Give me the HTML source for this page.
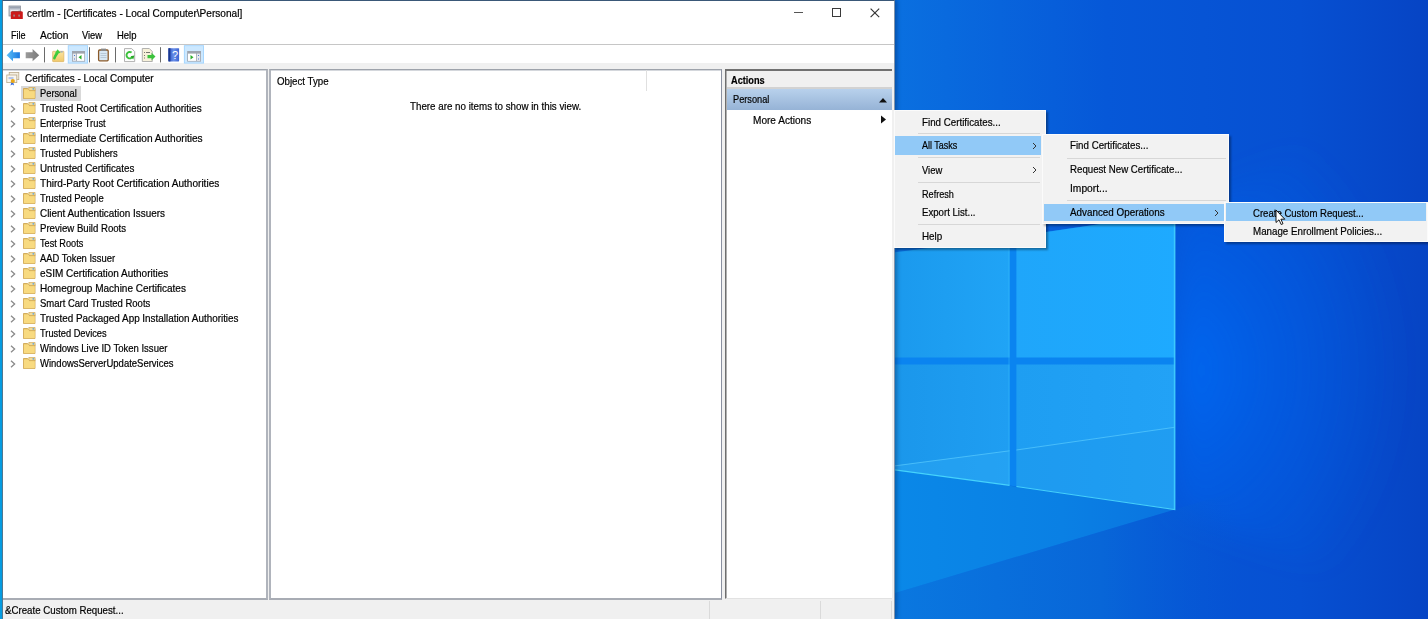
<!DOCTYPE html>
<html><head><meta charset="utf-8">
<style>
*{margin:0;padding:0;box-sizing:border-box}
html,body{width:1428px;height:619px;overflow:hidden;background:#0a5fd0}
body{position:relative;font-family:"Liberation Sans",sans-serif;font-size:9.8px;color:#161616}
.a{position:absolute;display:block}
.t{position:absolute;white-space:nowrap;line-height:1;transform-origin:0 0;color:#000;-webkit-text-stroke:0.2px #000}
.b{position:absolute}
</style></head><body>
<svg class="a" style="left:0;top:0" width="1428" height="619" viewBox="0 0 1428 619">
<defs>
<linearGradient id="bg" x1="893" y1="0" x2="1428" y2="0" gradientUnits="userSpaceOnUse">
<stop offset="0" stop-color="#0a70e0"/>
<stop offset="0.4" stop-color="#0658d8"/>
<stop offset="0.76" stop-color="#0650d2"/>
<stop offset="1" stop-color="#0644c4"/>
</linearGradient>
<linearGradient id="glow" x1="1175" y1="0" x2="1400" y2="0" gradientUnits="userSpaceOnUse">
<stop offset="0" stop-color="#0066f0" stop-opacity="1"/>
<stop offset="1" stop-color="#0066f0" stop-opacity="0"/>
</linearGradient>
<radialGradient id="glow2" cx="1175" cy="370" r="230" gradientUnits="userSpaceOnUse" gradientTransform="translate(1175 370) scale(1 1.2) translate(-1175 -370)">
<stop offset="0" stop-color="#0068f2" stop-opacity="0.95"/>
<stop offset="0.5" stop-color="#0062ec" stop-opacity="0.45"/>
<stop offset="1" stop-color="#0060e8" stop-opacity="0"/>
</radialGradient>
<filter id="gb" x="-50%" y="-50%" width="200%" height="200%"><feGaussianBlur stdDeviation="14"/></filter>
<linearGradient id="below" x1="893" y1="0" x2="1240" y2="0" gradientUnits="userSpaceOnUse">
<stop offset="0" stop-color="#0a78e0"/>
<stop offset="0.6" stop-color="#0866d8"/>
<stop offset="1" stop-color="#0658d4" stop-opacity="0"/>
</linearGradient>
<linearGradient id="floor" x1="893" y1="0" x2="1175" y2="0" gradientUnits="userSpaceOnUse">
<stop offset="0" stop-color="#0a88e8"/>
<stop offset="0.6" stop-color="#0a80e4"/>
<stop offset="1" stop-color="#0a74e0"/>
</linearGradient>
<linearGradient id="pul" x1="880" y1="0" x2="1010" y2="0" gradientUnits="userSpaceOnUse">
<stop offset="0" stop-color="#1a98ec"/><stop offset="1" stop-color="#20a4f6"/>
</linearGradient>
<linearGradient id="pur" x1="1017" y1="0" x2="1175" y2="0" gradientUnits="userSpaceOnUse">
<stop offset="0" stop-color="#1fa6fa"/><stop offset="1" stop-color="#1eaaff"/>
</linearGradient>
<linearGradient id="pll" x1="880" y1="0" x2="1010" y2="0" gradientUnits="userSpaceOnUse">
<stop offset="0" stop-color="#1a96ea"/><stop offset="1" stop-color="#1f9ef2"/>
</linearGradient>
<linearGradient id="plr" x1="1017" y1="0" x2="1175" y2="0" gradientUnits="userSpaceOnUse">
<stop offset="0" stop-color="#1e9ef2"/><stop offset="1" stop-color="#22a2f6"/>
</linearGradient>
</defs>
<rect width="1428" height="619" fill="url(#bg)"/>
<rect x="0" y="0" width="4" height="619" fill="#06a0e6"/>
<polygon points="1175,213 1300,150 1428,140 1428,600 1300,560 1175,509" fill="url(#glow2)" filter="url(#gb)"/>
<polygon points="880,597.5 1175,509.5 1428,434 1428,619 880,619" fill="url(#below)"/>
<polygon points="880,467 1175,509.5 880,597.5" fill="url(#floor)"/>
<polygon points="880,256 1175,213 1175,509 880,467" fill="#0a84f0"/>
<polygon points="880,254.3 1009.6,237.5 1009.6,357.6 880,357.6" fill="url(#pul)"/>
<polygon points="1016.4,236.5 1174.5,213 1174.5,357.6 1016.4,357.6" fill="url(#pur)"/>
<polygon points="880,364.5 1009.6,364.5 1009.6,485 880,467.5" fill="url(#pll)"/>
<polygon points="1016.4,364.5 1174.5,364.5 1174.5,509 1016.4,486" fill="url(#plr)"/>
<polygon points="880,467.5 1009.6,450.8 1009.6,485" fill="#2aa6f4" opacity="0.5"/>
<polygon points="1016.4,450 1174.5,427.3 1174.5,509 1016.4,486" fill="#1c94ec" opacity="0.35"/>
<path d="M880,467.8 L1009.6,450.8 M1016.4,450 L1174.5,427.3" stroke="#60d0ff" stroke-width="0.9" opacity="0.7"/>
<path d="M1174.8,213 V509.5 L1016.4,486.5 M1009.6,485.3 L880,467.8" stroke="#50e0ff" stroke-width="1.2" fill="none" opacity="0.85"/>
<path d="M1009,238 V485 M1174,214 V509" stroke="#40c8ff" stroke-width="0.8" opacity="0.5"/>
</svg>
<div class="b" style="left:2px;top:0;width:893px;height:619px;background:#fff;border:1px solid #3a5878;border-right-color:rgba(30,60,100,0.55);border-left-color:#4f7890;border-bottom:none;box-shadow:2px 0 4px rgba(0,20,60,0.35)"></div>
<div class="b" style="left:3px;top:44px;width:891px;height:1px;background:#c6c6c6"></div>
<div class="b" style="left:3px;top:63px;width:891px;height:556px;background:#f0f0f0"></div>
<div class="b" style="left:3px;top:69px;width:265px;height:531px;background:#fff;border-top:1px solid #9ea3ab;border-right:2px solid #b0b4bc;border-bottom:2px solid #a8acb4;box-shadow:inset 0 1px 0 #d4d7dc"></div>
<div class="b" style="left:269px;top:69px;width:453px;height:531px;background:#fff;border-top:1px solid #9ea3ab;border-left:2px solid #b0b4bc;border-right:1px solid #8a90a0;border-bottom:2px solid #a8acb4;box-shadow:inset 0 1px 0 #d4d7dc"></div>
<div class="b" style="left:725px;top:69px;width:167px;height:530px;background:#fff;border-left:1px solid #6e6e6e;border-top:2px solid #707070;border-bottom:1px solid #e2e2e2;box-shadow:inset 1px 0 0 #b0b0b0"></div>
<div class="b" style="left:727px;top:71px;width:165px;height:18px;background:#f0f0f0;border-bottom:2px solid #d2d2d2"></div>
<div class="b" style="left:727px;top:89px;width:165px;height:20.6px;background:linear-gradient(#b8d1ec,#96b3d6)"></div>
<div class="b" style="left:646px;top:70px;width:1px;height:21px;background:#e0e0e0"></div>
<div class="b" style="left:709px;top:601px;width:1px;height:18px;background:#dadada"></div>
<div class="b" style="left:820px;top:601px;width:1px;height:18px;background:#dadada"></div>
<div class="b" style="left:891px;top:601px;width:1px;height:18px;background:#dadada"></div>
<div class="b" style="left:21px;top:86px;width:60px;height:15px;background:#d9d9d9"></div>
<svg class="a" style="left:8px;top:5px" width="16" height="15" viewBox="0 0 16 15"><rect x="1" y="1" width="11.5" height="10" fill="#c8cdd6" stroke="#8a909a" stroke-width="0.8"/><rect x="1.5" y="1.5" width="10.5" height="2" fill="#9aa2b0"/><rect x="2.5" y="5" width="8" height="4" fill="#eef0f4"/><path d="M2.8 7.6 q0-1.4 1.4-1.4 h8.8 q1.8 0 1.8 1.4 v6.5 h-12z" fill="#cc1a1a"/><path d="M4.2 6.4 h8.8" stroke="#7a3030" stroke-width="0.6"/><rect x="5.4" y="9.6" width="1.4" height="2" fill="#9a9a9a"/><rect x="10.4" y="9.6" width="1.4" height="2" fill="#9a9a9a"/></svg>
<div class="b" style="left:794px;top:12px;width:9px;height:1px;background:#555"></div>
<div class="b" style="left:832px;top:8px;width:8.6px;height:8.6px;border:1px solid #3a3a3a"></div>
<svg class="a" style="left:870px;top:8px" width="10" height="10" viewBox="0 0 10 10"><path d="M0.6 0.6 L9.2 9.2 M9.2 0.6 L0.6 9.2" stroke="#333" stroke-width="1.15"/></svg>
<svg class="a" style="left:6px;top:72px" width="14" height="14" viewBox="0 0 14 14"><rect x="3.2" y="0.4" width="9.6" height="7.2" fill="#f4efe2" stroke="#b9a98a" stroke-width="0.8"/><rect x="0.8" y="3" width="10" height="7.6" fill="#faf7ee" stroke="#b9a98a" stroke-width="0.8"/><rect x="2.5" y="5" width="5" height="2.2" fill="#b8c6e8"/><path d="M5.3 10.5 l-0.8 3 l1.8-1 l1.8 1 l-0.8-3z" fill="#3b6fe0"/><circle cx="6.8" cy="9" r="2.1" fill="#e8a81a"/></svg>
<svg class="a" style="left:23px;top:87.0px" width="13" height="12" viewBox="0 0 13 12"><path d="M0.5 1.5 h4 l1 1 h6.5 v9 h-11.5z" fill="#e8c46a" stroke="#caa04a" stroke-width="0.8"/><path d="M5.8 0.5 h6.3 v3 h-6.3z" fill="#f2dc9a" stroke="#caa04a" stroke-width="0.6"/><circle cx="10.3" cy="1.8" r="0.9" fill="#6aa6d8"/><path d="M0.9 2.6 h4.6 l0.8 1.6 h5.5 v7 h-10.9z" fill="#f8da80"/></svg>
<svg class="a" style="left:23px;top:102.0px" width="13" height="12" viewBox="0 0 13 12"><path d="M0.5 1.5 h4 l1 1 h6.5 v9 h-11.5z" fill="#e8c46a" stroke="#caa04a" stroke-width="0.8"/><path d="M5.8 0.5 h6.3 v3 h-6.3z" fill="#f2dc9a" stroke="#caa04a" stroke-width="0.6"/><circle cx="10.3" cy="1.8" r="0.9" fill="#6aa6d8"/><path d="M0.9 2.6 h4.6 l0.8 1.6 h5.5 v7 h-10.9z" fill="#f8da80"/></svg>
<svg class="a" style="left:9.6px;top:105.1px" width="6" height="8" viewBox="0 0 6 8"><path d="M1 0.8 L4.6 4 L1 7.2" fill="none" stroke="#8a8a8a" stroke-width="1.3"/></svg>
<svg class="a" style="left:23px;top:117.0px" width="13" height="12" viewBox="0 0 13 12"><path d="M0.5 1.5 h4 l1 1 h6.5 v9 h-11.5z" fill="#e8c46a" stroke="#caa04a" stroke-width="0.8"/><path d="M5.8 0.5 h6.3 v3 h-6.3z" fill="#f2dc9a" stroke="#caa04a" stroke-width="0.6"/><circle cx="10.3" cy="1.8" r="0.9" fill="#6aa6d8"/><path d="M0.9 2.6 h4.6 l0.8 1.6 h5.5 v7 h-10.9z" fill="#f8da80"/></svg>
<svg class="a" style="left:9.6px;top:120.1px" width="6" height="8" viewBox="0 0 6 8"><path d="M1 0.8 L4.6 4 L1 7.2" fill="none" stroke="#8a8a8a" stroke-width="1.3"/></svg>
<svg class="a" style="left:23px;top:132.0px" width="13" height="12" viewBox="0 0 13 12"><path d="M0.5 1.5 h4 l1 1 h6.5 v9 h-11.5z" fill="#e8c46a" stroke="#caa04a" stroke-width="0.8"/><path d="M5.8 0.5 h6.3 v3 h-6.3z" fill="#f2dc9a" stroke="#caa04a" stroke-width="0.6"/><circle cx="10.3" cy="1.8" r="0.9" fill="#6aa6d8"/><path d="M0.9 2.6 h4.6 l0.8 1.6 h5.5 v7 h-10.9z" fill="#f8da80"/></svg>
<svg class="a" style="left:9.6px;top:135.1px" width="6" height="8" viewBox="0 0 6 8"><path d="M1 0.8 L4.6 4 L1 7.2" fill="none" stroke="#8a8a8a" stroke-width="1.3"/></svg>
<svg class="a" style="left:23px;top:147.0px" width="13" height="12" viewBox="0 0 13 12"><path d="M0.5 1.5 h4 l1 1 h6.5 v9 h-11.5z" fill="#e8c46a" stroke="#caa04a" stroke-width="0.8"/><path d="M5.8 0.5 h6.3 v3 h-6.3z" fill="#f2dc9a" stroke="#caa04a" stroke-width="0.6"/><circle cx="10.3" cy="1.8" r="0.9" fill="#6aa6d8"/><path d="M0.9 2.6 h4.6 l0.8 1.6 h5.5 v7 h-10.9z" fill="#f8da80"/></svg>
<svg class="a" style="left:9.6px;top:150.1px" width="6" height="8" viewBox="0 0 6 8"><path d="M1 0.8 L4.6 4 L1 7.2" fill="none" stroke="#8a8a8a" stroke-width="1.3"/></svg>
<svg class="a" style="left:23px;top:162.0px" width="13" height="12" viewBox="0 0 13 12"><path d="M0.5 1.5 h4 l1 1 h6.5 v9 h-11.5z" fill="#e8c46a" stroke="#caa04a" stroke-width="0.8"/><path d="M5.8 0.5 h6.3 v3 h-6.3z" fill="#f2dc9a" stroke="#caa04a" stroke-width="0.6"/><circle cx="10.3" cy="1.8" r="0.9" fill="#6aa6d8"/><path d="M0.9 2.6 h4.6 l0.8 1.6 h5.5 v7 h-10.9z" fill="#f8da80"/></svg>
<svg class="a" style="left:9.6px;top:165.1px" width="6" height="8" viewBox="0 0 6 8"><path d="M1 0.8 L4.6 4 L1 7.2" fill="none" stroke="#8a8a8a" stroke-width="1.3"/></svg>
<svg class="a" style="left:23px;top:177.0px" width="13" height="12" viewBox="0 0 13 12"><path d="M0.5 1.5 h4 l1 1 h6.5 v9 h-11.5z" fill="#e8c46a" stroke="#caa04a" stroke-width="0.8"/><path d="M5.8 0.5 h6.3 v3 h-6.3z" fill="#f2dc9a" stroke="#caa04a" stroke-width="0.6"/><circle cx="10.3" cy="1.8" r="0.9" fill="#6aa6d8"/><path d="M0.9 2.6 h4.6 l0.8 1.6 h5.5 v7 h-10.9z" fill="#f8da80"/></svg>
<svg class="a" style="left:9.6px;top:180.1px" width="6" height="8" viewBox="0 0 6 8"><path d="M1 0.8 L4.6 4 L1 7.2" fill="none" stroke="#8a8a8a" stroke-width="1.3"/></svg>
<svg class="a" style="left:23px;top:192.0px" width="13" height="12" viewBox="0 0 13 12"><path d="M0.5 1.5 h4 l1 1 h6.5 v9 h-11.5z" fill="#e8c46a" stroke="#caa04a" stroke-width="0.8"/><path d="M5.8 0.5 h6.3 v3 h-6.3z" fill="#f2dc9a" stroke="#caa04a" stroke-width="0.6"/><circle cx="10.3" cy="1.8" r="0.9" fill="#6aa6d8"/><path d="M0.9 2.6 h4.6 l0.8 1.6 h5.5 v7 h-10.9z" fill="#f8da80"/></svg>
<svg class="a" style="left:9.6px;top:195.1px" width="6" height="8" viewBox="0 0 6 8"><path d="M1 0.8 L4.6 4 L1 7.2" fill="none" stroke="#8a8a8a" stroke-width="1.3"/></svg>
<svg class="a" style="left:23px;top:207.0px" width="13" height="12" viewBox="0 0 13 12"><path d="M0.5 1.5 h4 l1 1 h6.5 v9 h-11.5z" fill="#e8c46a" stroke="#caa04a" stroke-width="0.8"/><path d="M5.8 0.5 h6.3 v3 h-6.3z" fill="#f2dc9a" stroke="#caa04a" stroke-width="0.6"/><circle cx="10.3" cy="1.8" r="0.9" fill="#6aa6d8"/><path d="M0.9 2.6 h4.6 l0.8 1.6 h5.5 v7 h-10.9z" fill="#f8da80"/></svg>
<svg class="a" style="left:9.6px;top:210.1px" width="6" height="8" viewBox="0 0 6 8"><path d="M1 0.8 L4.6 4 L1 7.2" fill="none" stroke="#8a8a8a" stroke-width="1.3"/></svg>
<svg class="a" style="left:23px;top:222.0px" width="13" height="12" viewBox="0 0 13 12"><path d="M0.5 1.5 h4 l1 1 h6.5 v9 h-11.5z" fill="#e8c46a" stroke="#caa04a" stroke-width="0.8"/><path d="M5.8 0.5 h6.3 v3 h-6.3z" fill="#f2dc9a" stroke="#caa04a" stroke-width="0.6"/><circle cx="10.3" cy="1.8" r="0.9" fill="#6aa6d8"/><path d="M0.9 2.6 h4.6 l0.8 1.6 h5.5 v7 h-10.9z" fill="#f8da80"/></svg>
<svg class="a" style="left:9.6px;top:225.1px" width="6" height="8" viewBox="0 0 6 8"><path d="M1 0.8 L4.6 4 L1 7.2" fill="none" stroke="#8a8a8a" stroke-width="1.3"/></svg>
<svg class="a" style="left:23px;top:237.0px" width="13" height="12" viewBox="0 0 13 12"><path d="M0.5 1.5 h4 l1 1 h6.5 v9 h-11.5z" fill="#e8c46a" stroke="#caa04a" stroke-width="0.8"/><path d="M5.8 0.5 h6.3 v3 h-6.3z" fill="#f2dc9a" stroke="#caa04a" stroke-width="0.6"/><circle cx="10.3" cy="1.8" r="0.9" fill="#6aa6d8"/><path d="M0.9 2.6 h4.6 l0.8 1.6 h5.5 v7 h-10.9z" fill="#f8da80"/></svg>
<svg class="a" style="left:9.6px;top:240.1px" width="6" height="8" viewBox="0 0 6 8"><path d="M1 0.8 L4.6 4 L1 7.2" fill="none" stroke="#8a8a8a" stroke-width="1.3"/></svg>
<svg class="a" style="left:23px;top:252.0px" width="13" height="12" viewBox="0 0 13 12"><path d="M0.5 1.5 h4 l1 1 h6.5 v9 h-11.5z" fill="#e8c46a" stroke="#caa04a" stroke-width="0.8"/><path d="M5.8 0.5 h6.3 v3 h-6.3z" fill="#f2dc9a" stroke="#caa04a" stroke-width="0.6"/><circle cx="10.3" cy="1.8" r="0.9" fill="#6aa6d8"/><path d="M0.9 2.6 h4.6 l0.8 1.6 h5.5 v7 h-10.9z" fill="#f8da80"/></svg>
<svg class="a" style="left:9.6px;top:255.1px" width="6" height="8" viewBox="0 0 6 8"><path d="M1 0.8 L4.6 4 L1 7.2" fill="none" stroke="#8a8a8a" stroke-width="1.3"/></svg>
<svg class="a" style="left:23px;top:267.0px" width="13" height="12" viewBox="0 0 13 12"><path d="M0.5 1.5 h4 l1 1 h6.5 v9 h-11.5z" fill="#e8c46a" stroke="#caa04a" stroke-width="0.8"/><path d="M5.8 0.5 h6.3 v3 h-6.3z" fill="#f2dc9a" stroke="#caa04a" stroke-width="0.6"/><circle cx="10.3" cy="1.8" r="0.9" fill="#6aa6d8"/><path d="M0.9 2.6 h4.6 l0.8 1.6 h5.5 v7 h-10.9z" fill="#f8da80"/></svg>
<svg class="a" style="left:9.6px;top:270.1px" width="6" height="8" viewBox="0 0 6 8"><path d="M1 0.8 L4.6 4 L1 7.2" fill="none" stroke="#8a8a8a" stroke-width="1.3"/></svg>
<svg class="a" style="left:23px;top:282.0px" width="13" height="12" viewBox="0 0 13 12"><path d="M0.5 1.5 h4 l1 1 h6.5 v9 h-11.5z" fill="#e8c46a" stroke="#caa04a" stroke-width="0.8"/><path d="M5.8 0.5 h6.3 v3 h-6.3z" fill="#f2dc9a" stroke="#caa04a" stroke-width="0.6"/><circle cx="10.3" cy="1.8" r="0.9" fill="#6aa6d8"/><path d="M0.9 2.6 h4.6 l0.8 1.6 h5.5 v7 h-10.9z" fill="#f8da80"/></svg>
<svg class="a" style="left:9.6px;top:285.1px" width="6" height="8" viewBox="0 0 6 8"><path d="M1 0.8 L4.6 4 L1 7.2" fill="none" stroke="#8a8a8a" stroke-width="1.3"/></svg>
<svg class="a" style="left:23px;top:297.0px" width="13" height="12" viewBox="0 0 13 12"><path d="M0.5 1.5 h4 l1 1 h6.5 v9 h-11.5z" fill="#e8c46a" stroke="#caa04a" stroke-width="0.8"/><path d="M5.8 0.5 h6.3 v3 h-6.3z" fill="#f2dc9a" stroke="#caa04a" stroke-width="0.6"/><circle cx="10.3" cy="1.8" r="0.9" fill="#6aa6d8"/><path d="M0.9 2.6 h4.6 l0.8 1.6 h5.5 v7 h-10.9z" fill="#f8da80"/></svg>
<svg class="a" style="left:9.6px;top:300.1px" width="6" height="8" viewBox="0 0 6 8"><path d="M1 0.8 L4.6 4 L1 7.2" fill="none" stroke="#8a8a8a" stroke-width="1.3"/></svg>
<svg class="a" style="left:23px;top:312.0px" width="13" height="12" viewBox="0 0 13 12"><path d="M0.5 1.5 h4 l1 1 h6.5 v9 h-11.5z" fill="#e8c46a" stroke="#caa04a" stroke-width="0.8"/><path d="M5.8 0.5 h6.3 v3 h-6.3z" fill="#f2dc9a" stroke="#caa04a" stroke-width="0.6"/><circle cx="10.3" cy="1.8" r="0.9" fill="#6aa6d8"/><path d="M0.9 2.6 h4.6 l0.8 1.6 h5.5 v7 h-10.9z" fill="#f8da80"/></svg>
<svg class="a" style="left:9.6px;top:315.1px" width="6" height="8" viewBox="0 0 6 8"><path d="M1 0.8 L4.6 4 L1 7.2" fill="none" stroke="#8a8a8a" stroke-width="1.3"/></svg>
<svg class="a" style="left:23px;top:327.0px" width="13" height="12" viewBox="0 0 13 12"><path d="M0.5 1.5 h4 l1 1 h6.5 v9 h-11.5z" fill="#e8c46a" stroke="#caa04a" stroke-width="0.8"/><path d="M5.8 0.5 h6.3 v3 h-6.3z" fill="#f2dc9a" stroke="#caa04a" stroke-width="0.6"/><circle cx="10.3" cy="1.8" r="0.9" fill="#6aa6d8"/><path d="M0.9 2.6 h4.6 l0.8 1.6 h5.5 v7 h-10.9z" fill="#f8da80"/></svg>
<svg class="a" style="left:9.6px;top:330.1px" width="6" height="8" viewBox="0 0 6 8"><path d="M1 0.8 L4.6 4 L1 7.2" fill="none" stroke="#8a8a8a" stroke-width="1.3"/></svg>
<svg class="a" style="left:23px;top:342.0px" width="13" height="12" viewBox="0 0 13 12"><path d="M0.5 1.5 h4 l1 1 h6.5 v9 h-11.5z" fill="#e8c46a" stroke="#caa04a" stroke-width="0.8"/><path d="M5.8 0.5 h6.3 v3 h-6.3z" fill="#f2dc9a" stroke="#caa04a" stroke-width="0.6"/><circle cx="10.3" cy="1.8" r="0.9" fill="#6aa6d8"/><path d="M0.9 2.6 h4.6 l0.8 1.6 h5.5 v7 h-10.9z" fill="#f8da80"/></svg>
<svg class="a" style="left:9.6px;top:345.1px" width="6" height="8" viewBox="0 0 6 8"><path d="M1 0.8 L4.6 4 L1 7.2" fill="none" stroke="#8a8a8a" stroke-width="1.3"/></svg>
<svg class="a" style="left:23px;top:357.0px" width="13" height="12" viewBox="0 0 13 12"><path d="M0.5 1.5 h4 l1 1 h6.5 v9 h-11.5z" fill="#e8c46a" stroke="#caa04a" stroke-width="0.8"/><path d="M5.8 0.5 h6.3 v3 h-6.3z" fill="#f2dc9a" stroke="#caa04a" stroke-width="0.6"/><circle cx="10.3" cy="1.8" r="0.9" fill="#6aa6d8"/><path d="M0.9 2.6 h4.6 l0.8 1.6 h5.5 v7 h-10.9z" fill="#f8da80"/></svg>
<svg class="a" style="left:9.6px;top:360.1px" width="6" height="8" viewBox="0 0 6 8"><path d="M1 0.8 L4.6 4 L1 7.2" fill="none" stroke="#8a8a8a" stroke-width="1.3"/></svg>
<svg class="a" style="left:878px;top:97px" width="10" height="6" viewBox="0 0 10 6"><path d="M1 5.5 L5 1 L9 5.5z" fill="#111"/></svg>
<svg class="a" style="left:880px;top:115px" width="7" height="9" viewBox="0 0 7 9"><path d="M1 0.5 L6 4.5 L1 8.5z" fill="#111"/></svg>
<svg class="a" style="left:0;top:44px" width="210" height="22" viewBox="0 44 210 22">
<defs>
<linearGradient id="ab" x1="0" x2="1"><stop offset="0" stop-color="#5cc0f8"/><stop offset="1" stop-color="#1a78e0"/></linearGradient>
<linearGradient id="ag" x1="0" x2="1"><stop offset="0" stop-color="#9a9a9a"/><stop offset="1" stop-color="#7a7a7a"/></linearGradient>
</defs>
<path d="M6.6 55.2 L13 49.1 V52.2 H19.9 V58.2 H13 V61.2z" fill="url(#ab)"/>
<path d="M39.2 55.2 L32.6 49.1 V52.2 H25.7 V58.2 H32.6 V61.2z" fill="url(#ag)"/>
<rect x="44" y="47.2" width="1" height="15.2" fill="#6a6a6a"/>
<defs><linearGradient id="fy" x1="0" y1="0" x2="0" y2="1"><stop offset="0" stop-color="#fbe3a0"/><stop offset="1" stop-color="#f0c96a"/></linearGradient></defs>
<rect x="52.6" y="51.3" width="11.3" height="10.4" rx="0.6" fill="url(#fy)" stroke="#d5ad5a" stroke-width="0.6"/>
<rect x="60.5" y="51" width="2.2" height="1.6" fill="#a8b0b8"/>
<path d="M54.4 58.2 C55.2 55.5 56.6 54.2 57.6 52.6" fill="none" stroke="#3cc83c" stroke-width="2.6" stroke-linecap="round"/>
<path d="M54.8 53.4 L57.6 49.2 L60.6 52.9z" fill="#40d040"/>
<rect x="68.2" y="45.7" width="19.4" height="17.4" fill="#cce8ff" stroke="#99d1ff" stroke-width="0.8"/>
<rect x="72" y="51" width="13" height="10.6" fill="#9ea4ae"/>
<rect x="72.8" y="53.6" width="3.4" height="7.3" fill="#e6e8ee"/>
<rect x="77" y="53.6" width="7.3" height="7.3" fill="#fff"/>
<path d="M78.5 57.2 L81.5 55 V59.4z" fill="#2cae2c"/>
<rect x="74" y="55" width="1" height="1" fill="#4a7ad0"/><rect x="74" y="58.5" width="1" height="1" fill="#4a7ad0"/>
<rect x="89" y="47.2" width="1" height="15.2" fill="#6a6a6a"/>
<rect x="98.6" y="50" width="9.6" height="10.8" rx="1" fill="#d8e8f4" stroke="#8a5a2a" stroke-width="1.3"/>
<rect x="101" y="48.6" width="5" height="2.4" fill="#8a8a8a"/>
<path d="M100.5 53.5 h6 M100.5 55.5 h6 M100.5 57.5 h6" stroke="#9ab" stroke-width="0.5"/>
<rect x="115" y="47.2" width="1" height="15.2" fill="#6a6a6a"/>
<path d="M124.5 48.6 h7.2 l3 3 v10 h-10.2z" fill="#fdfdfd" stroke="#a8a8a8" stroke-width="0.9"/>
<path d="M132.6 56.6 A3.2 3.2 0 1 1 131.6 52.6" fill="none" stroke="#3cc23c" stroke-width="1.9"/>
<path d="M130.6 56.2 L134.4 55.6 L133.2 59.4z" fill="#28a828"/>
<path d="M142.3 48.5 h7 l3 3 v10 h-10z" fill="#f7f1da" stroke="#a0a0a0" stroke-width="0.8"/>
<path d="M144 52.5 h1 M146 52.5 h4 M144 55.5 h1 M144 58 h1" stroke="#555" stroke-width="0.8"/>
<path d="M147.5 55 h4 v-2.2 l4 3.8 l-4 3.8 v-2.2 h-4z" fill="#3cc23c"/>
<rect x="160" y="47.2" width="1" height="15.2" fill="#6a6a6a"/>
<defs><linearGradient id="hb" x1="0" y1="0" x2="1" y2="0"><stop offset="0" stop-color="#2a50c0"/><stop offset="0.5" stop-color="#6a90ea"/><stop offset="1" stop-color="#3a62d0"/></linearGradient></defs>
<rect x="168.4" y="48.2" width="10.7" height="13.2" rx="0.6" fill="url(#hb)"/>
<rect x="168.4" y="48.2" width="2" height="13.2" fill="#1a3890"/>
<text x="175" y="59.4" font-family="Liberation Sans" font-size="11" fill="#fff" text-anchor="middle">?</text>
<rect x="184.3" y="45.7" width="19.3" height="17.4" fill="#cce8ff" stroke="#99d1ff" stroke-width="0.8"/>
<rect x="187.2" y="51" width="13.8" height="10.6" fill="#9ea4ae"/>
<rect x="188" y="53.6" width="8.2" height="7.3" fill="#fff"/>
<rect x="197" y="53.6" width="3.2" height="7.3" fill="#e6e8ee"/>
<path d="M190.5 55 L193.5 57.2 L190.5 59.4z" fill="#2cae2c"/>
<rect x="198" y="55" width="1" height="1" fill="#4a7ad0"/><rect x="198" y="58.5" width="1" height="1" fill="#4a7ad0"/>
</svg>
<div class="b" style="left:893.5px;top:109.7px;width:152px;height:138px;background:#f2f2f2;border:1px solid #fbfbfb;box-shadow:2px 2px 2px rgba(0,0,0,0.35)"></div>
<div class="b" style="left:894.5px;top:136.4px;width:146.5px;height:18.4px;background:#91c9f7"></div>
<div class="b" style="left:918px;top:133px;width:122px;height:1px;background:#d7d7d7"></div>
<div class="b" style="left:918px;top:157px;width:122px;height:1px;background:#d7d7d7"></div>
<div class="b" style="left:918px;top:181.5px;width:122px;height:1px;background:#d7d7d7"></div>
<div class="b" style="left:918px;top:224px;width:122px;height:1px;background:#d7d7d7"></div>
<svg class="a" style="left:1032px;top:141.5px" width="5" height="8" viewBox="0 0 5 8"><path d="M1 1 L4 4 L1 7" fill="none" stroke="#333" stroke-width="1"/></svg>
<svg class="a" style="left:1032px;top:165.5px" width="5" height="8" viewBox="0 0 5 8"><path d="M1 1 L4 4 L1 7" fill="none" stroke="#333" stroke-width="1"/></svg>
<div class="b" style="left:1041.5px;top:134px;width:187px;height:90px;background:#f2f2f2;border:1px solid #fbfbfb;box-shadow:2px 2px 2px rgba(0,0,0,0.35)"></div>
<div class="b" style="left:1043.6px;top:203.5px;width:180.2px;height:17.8px;background:#91c9f7"></div>
<div class="b" style="left:1066.7px;top:157.5px;width:159px;height:1px;background:#d7d7d7"></div>
<div class="b" style="left:1066.7px;top:200.3px;width:159px;height:1px;background:#d7d7d7"></div>
<svg class="a" style="left:1214px;top:208.5px" width="5" height="8" viewBox="0 0 5 8"><path d="M1 1 L4 4 L1 7" fill="none" stroke="#333" stroke-width="1"/></svg>
<div class="b" style="left:1224.4px;top:201.6px;width:203.6px;height:40.5px;background:#f2f2f2;border:1px solid #fbfbfb;box-shadow:2px 2px 2px rgba(0,0,0,0.35)"></div>
<div class="b" style="left:1226.1px;top:203.4px;width:200px;height:18.1px;background:#91c9f7"></div>
<div class="t" style="left:26.80px;top:8.01px;font-size:10.5px;transform:scaleX(0.9603);">certlm - [Certificates - Local Computer\Personal]</div>
<div class="t" style="left:11.30px;top:29.61px;font-size:10.5px;transform:scaleX(0.8647);">File</div>
<div class="t" style="left:39.60px;top:29.61px;font-size:10.5px;transform:scaleX(0.9759);">Action</div>
<div class="t" style="left:82.00px;top:29.61px;font-size:10.5px;transform:scaleX(0.8826);">View</div>
<div class="t" style="left:116.50px;top:29.61px;font-size:10.5px;transform:scaleX(0.9);">Help</div>
<div class="t" style="left:24.60px;top:73.41px;font-size:10.5px;transform:scaleX(0.9456);">Certificates - Local Computer</div>
<div class="t" style="left:40.40px;top:88.21px;font-size:10.5px;transform:scaleX(0.8857);">Personal</div>
<div class="t" style="left:40.40px;top:103.21px;font-size:10.5px;transform:scaleX(0.9485);">Trusted Root Certification Authorities</div>
<div class="t" style="left:40.40px;top:118.21px;font-size:10.5px;transform:scaleX(0.8853);">Enterprise Trust</div>
<div class="t" style="left:40.40px;top:133.21px;font-size:10.5px;transform:scaleX(0.9645);">Intermediate Certification Authorities</div>
<div class="t" style="left:40.40px;top:148.21px;font-size:10.5px;transform:scaleX(0.8909);">Trusted Publishers</div>
<div class="t" style="left:40.40px;top:163.21px;font-size:10.5px;transform:scaleX(0.9347);">Untrusted Certificates</div>
<div class="t" style="left:40.40px;top:178.21px;font-size:10.5px;transform:scaleX(0.9569);">Third-Party Root Certification Authorities</div>
<div class="t" style="left:40.40px;top:193.21px;font-size:10.5px;transform:scaleX(0.8986);">Trusted People</div>
<div class="t" style="left:40.40px;top:208.21px;font-size:10.5px;transform:scaleX(0.9429);">Client Authentication Issuers</div>
<div class="t" style="left:40.40px;top:223.21px;font-size:10.5px;transform:scaleX(0.916);">Preview Build Roots</div>
<div class="t" style="left:40.40px;top:238.21px;font-size:10.5px;transform:scaleX(0.872);">Test Roots</div>
<div class="t" style="left:40.40px;top:253.21px;font-size:10.5px;transform:scaleX(0.8952);">AAD Token Issuer</div>
<div class="t" style="left:40.40px;top:268.21px;font-size:10.5px;transform:scaleX(0.9511);">eSIM Certification Authorities</div>
<div class="t" style="left:40.40px;top:283.21px;font-size:10.5px;transform:scaleX(0.9542);">Homegroup Machine Certificates</div>
<div class="t" style="left:40.40px;top:298.21px;font-size:10.5px;transform:scaleX(0.9041);">Smart Card Trusted Roots</div>
<div class="t" style="left:40.40px;top:313.21px;font-size:10.5px;transform:scaleX(0.9412);">Trusted Packaged App Installation Authorities</div>
<div class="t" style="left:40.40px;top:328.21px;font-size:10.5px;transform:scaleX(0.8829);">Trusted Devices</div>
<div class="t" style="left:40.40px;top:343.21px;font-size:10.5px;transform:scaleX(0.9071);">Windows Live ID Token Issuer</div>
<div class="t" style="left:40.40px;top:358.21px;font-size:10.5px;transform:scaleX(0.9041);">WindowsServerUpdateServices</div>
<div class="t" style="left:276.50px;top:76.01px;font-size:10.5px;transform:scaleX(0.925);">Object Type</div>
<div class="t" style="left:410.10px;top:100.51px;font-size:10.5px;transform:scaleX(0.931);">There are no items to show in this view.</div>
<div class="t" style="left:730.50px;top:74.51px;font-size:10.5px;transform:scaleX(0.8744);font-weight:bold;">Actions</div>
<div class="t" style="left:732.50px;top:94.41px;font-size:10.5px;transform:scaleX(0.8762);">Personal</div>
<div class="t" style="left:752.50px;top:114.71px;font-size:10.5px;transform:scaleX(0.959);">More Actions</div>
<div class="t" style="left:921.90px;top:116.61px;font-size:10.5px;transform:scaleX(0.9298);">Find Certificates...</div>
<div class="t" style="left:921.90px;top:140.41px;font-size:10.5px;transform:scaleX(0.8571);">All Tasks</div>
<div class="t" style="left:921.60px;top:165.01px;font-size:10.5px;transform:scaleX(0.8957);">View</div>
<div class="t" style="left:921.60px;top:188.91px;font-size:10.5px;transform:scaleX(0.8676);">Refresh</div>
<div class="t" style="left:921.60px;top:207.11px;font-size:10.5px;transform:scaleX(0.9172);">Export List...</div>
<div class="t" style="left:921.60px;top:231.21px;font-size:10.5px;transform:scaleX(0.9364);">Help</div>
<div class="t" style="left:1070.00px;top:140.11px;font-size:10.5px;transform:scaleX(0.9274);">Find Certificates...</div>
<div class="t" style="left:1070.00px;top:164.21px;font-size:10.5px;transform:scaleX(0.9221);">Request New Certificate...</div>
<div class="t" style="left:1070.00px;top:183.21px;font-size:10.5px;transform:scaleX(0.9763);">Import...</div>
<div class="t" style="left:1070.00px;top:206.81px;font-size:10.5px;transform:scaleX(0.9376);">Advanced Operations</div>
<div class="t" style="left:1253.20px;top:207.61px;font-size:10.5px;transform:scaleX(0.9116);">Create Custom Request...</div>
<div class="t" style="left:1253.20px;top:225.51px;font-size:10.5px;transform:scaleX(0.9295);">Manage Enrollment Policies...</div>
<div class="t" style="left:4.70px;top:605.41px;font-size:10.5px;transform:scaleX(0.9242);">&amp;Create Custom Request...</div>
<svg class="a" style="left:1275px;top:209px" width="12" height="17" viewBox="0 0 12 17"><path d="M1 1 V13.5 L4 10.8 L6.2 15.5 L8 14.7 L5.9 10.2 H9.8z" fill="#fff" stroke="#000" stroke-width="0.9"/></svg>
</body></html>
